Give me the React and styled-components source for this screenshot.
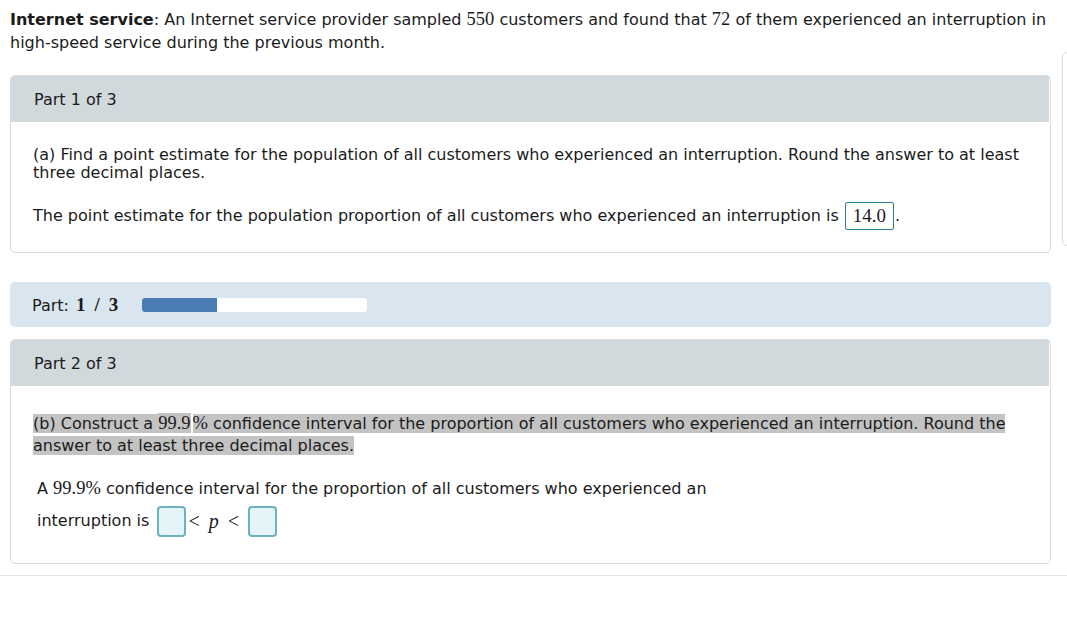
import styled, { createGlobalStyle } from "styled-components";

const GlobalStyle = createGlobalStyle`
  html, body {
    margin: 0;
    background: #fff;
    overflow: hidden;
  }
  body {
    font-family: "DejaVu Sans", Verdana, sans-serif;
    font-size: 16px;
    color: #1b1b1b;
  }
`;

export default function App() {
  return (
    <Page>
      <GlobalStyle />
      <Row>
        <Main>
          <Intro>
            <b>Internet service</b>: An Internet service provider sampled <M>550</M> customers and found that <M>72</M> of them
            experienced an interruption in high-speed service during the previous month.
          </Intro>

          <Panel $mt={21}>
            <PanelHeader>Part 1 of 3</PanelHeader>
            <PanelBody $pt={24}>
              <Question>
                (a) Find a point estimate for the population of all customers who experienced an interruption. Round the answer to at least
                three decimal places.
              </Question>
              <AnswerLine>
                The point estimate for the population proportion of all customers who experienced an interruption is
                <AnswerBox>14.0</AnswerBox>.
              </AnswerLine>
            </PanelBody>
          </Panel>

          <ProgressPanel>
            <PartLabel>
              Part: <Frac>1<Slash>/</Slash>3</Frac>
            </PartLabel>
            <Track>
              <Fill style={{ width: `${(1 / 3) * 100}%` }} />
            </Track>
          </ProgressPanel>

          <Panel $mt={12}>
            <PanelHeader>Part 2 of 3</PanelHeader>
            <PanelBody $pt={26} $pb={26}>
              <Highlighted>
                <Hl>(b) Construct a </Hl><HlMath>99.9</HlMath><Hl><M>%</M> confidence interval for the proportion of all customers who experienced an interruption. Round the answer to at least three decimal places.</Hl>
              </Highlighted>
              <Interval>
                <div>A <M>99.9%</M> confidence interval for the proportion of all customers who experienced an</div>
                <IntervalRow>
                  interruption is <InputBox />
                  <Rel>
                    <span>&lt;</span>
                    <i>p</i>
                    <span>&lt;</span>
                  </Rel>
                  <InputBox />
                </IntervalRow>
              </Interval>
            </PanelBody>
          </Panel>
        </Main>
        <Sidebar>
          <SideItem />
          <SideItem />
          <SideItem />
          <SideItem />
        </Sidebar>
      </Row>
      <Divider />
    </Page>
  );
}

const Page = styled.div`
  padding-top: 8px;
`;

const Row = styled.div`
  display: flex;
  align-items: flex-start;
  gap: 11px;
  padding-left: 10px;
`;

const Main = styled.div`
  width: 1041px;
  flex-shrink: 0;
`;

const Intro = styled.div`
  line-height: 23px;

  b {
    font-weight: 700;
  }
`;

const M = styled.span`
  font-family: "Liberation Serif", "Times New Roman", serif;
  font-size: 18.5px;
`;

const Panel = styled.div`
  margin-top: ${p => p.$mt}px;
  border: 1px solid #d5dcdf;
  border-radius: 5px;
  overflow: hidden;
  background: #fff;
`;

const PanelHeader = styled.div`
  height: 46px;
  display: flex;
  align-items: center;
  padding-left: 23px;
  background: #d1d9dc;
  margin-right: 1px;
`;

const PanelBody = styled.div`
  padding: ${p => p.$pt ?? 22}px 22px ${p => p.$pb ?? 22}px 22px;
`;

const Question = styled.div`
  line-height: 18px;
`;

const AnswerLine = styled.div`
  margin-top: 20px;
  display: flex;
  align-items: center;
  line-height: 28px;
  white-space: pre-wrap;
`;

const AnswerBox = styled.span`
  display: inline-flex;
  align-items: center;
  height: 26px;
  padding: 0 7px;
  margin: 0 1px 0 6px;
  border: 1px solid #2a7f8e;
  border-radius: 2px;
  font-family: "Liberation Serif", "Times New Roman", serif;
  font-size: 19px;
`;

const ProgressPanel = styled.div`
  margin-top: 29px;
  height: 45px;
  display: flex;
  align-items: center;
  gap: 24px;
  padding-left: 22px;
  background: #dae6ef;
  border-radius: 5px;
`;

const PartLabel = styled.span`
  display: flex;
  align-items: baseline;
  white-space: pre;
`;

const Frac = styled.b`
  font-family: "Liberation Serif", "Times New Roman", serif;
  font-size: 19px;
  font-weight: 700;
  margin-left: 2px;
`;

const Slash = styled.span`
  margin: 0 9px;
`;

const Track = styled.div`
  width: 225px;
  height: 14px;
  background: #fff;
  border-radius: 3px;
  overflow: hidden;
`;

const Fill = styled.div`
  height: 100%;
  background: #4a7db6;
`;

const Highlighted = styled.div`
  line-height: 22px;
`;

const Hl = styled.span`
  background: #c3c3c3;
`;

const HlMath = styled(Hl)`
  font-family: "Liberation Serif", "Times New Roman", serif;
  font-size: 18.5px;
  margin-right: 2px;
`;

const Interval = styled.div`
  margin-top: 20px;
  padding-left: 4px;
  line-height: 22px;
`;

const IntervalRow = styled.div`
  margin-top: 5px;
  display: flex;
  align-items: center;
  height: 32px;
  white-space: pre;
`;

const InputBox = styled.span`
  display: inline-block;
  width: 25px;
  height: 27px;
  margin-left: 3px;
  background: #e5f4f8;
  border: 2px solid #6db2bf;
  border-radius: 4px;
`;

const Rel = styled.span`
  display: flex;
  align-items: center;
  gap: 9px;
  margin: 0 6px 0 2px;
  font-family: "Liberation Serif", "Times New Roman", serif;
  font-size: 20px;

  i {
    font-style: italic;
  }
`;

const Sidebar = styled.div`
  margin-top: 44px;
  width: 40px;
  flex-shrink: 0;
  border: 1px solid #d5dcdf;
  border-radius: 5px;
  padding: 20px 0 0 4px;
`;

const SideItem = styled.div`
  height: 42px;
  border-top: 1px solid #d5dcdf;
`;

const Divider = styled.div`
  margin-top: 11px;
  border-top: 1px solid #e0e6e8;
`;
